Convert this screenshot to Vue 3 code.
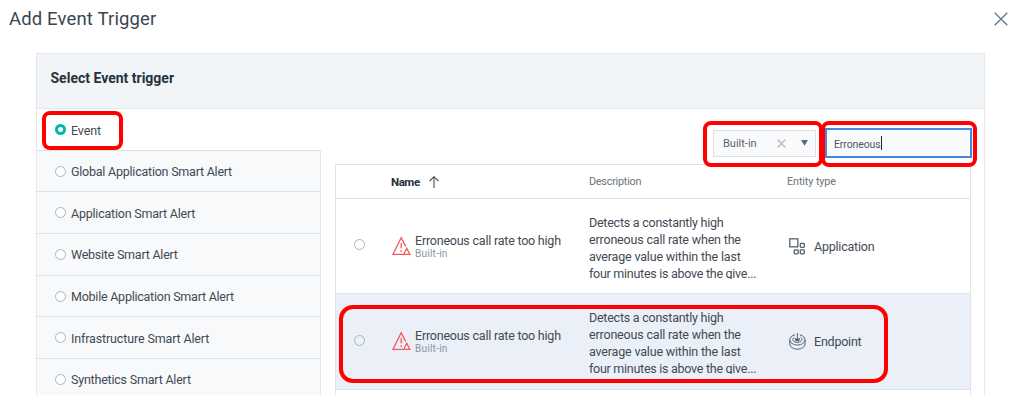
<script setup>
const triggers = [
  'Event',
  'Global Application Smart Alert',
  'Application Smart Alert',
  'Website Smart Alert',
  'Mobile Application Smart Alert',
  'Infrastructure Smart Alert',
  'Synthetics Smart Alert',
]
const spacing = ['t-event', 't-global', 't-app', 't-web', 't-mobile', 't-infra', 't-synth']
const rows = ['Application', 'Endpoint']
const lines = [
  'Detects a constantly high',
  'erroneous call rate when the',
  'average value within the last',
  'four minutes is above the give...',
]
</script>

<template>
  <div class="dialog">
    <header class="title-bar">
      <h1>Add Event Trigger</h1>
      <svg class="close" width="14" height="14" viewBox="0 0 14 14"><path d="M.7.7 13.3 13.3M13.3.7.7 13.3" /></svg>
    </header>

    <section class="panel">
      <div class="panel-head"><h2>Select Event trigger</h2></div>
      <div class="panel-body">
        <nav class="sidebar">
          <div v-for="(t, i) in triggers" :key="t" class="trigger" :class="{ active: i === 0 }">
            <span class="radio" :class="{ on: i === 0 }"></span>
            <span class="label" :class="spacing[i]">{{ t }}</span>
          </div>
        </nav>

        <main class="content">
          <div class="filters">
            <div class="select">
              <span>Built-in</span>
              <svg class="clear" width="9" height="9" viewBox="0 0 9 9"><path d="M.7.7 8.3 8.3M8.3.7.7 8.3" /></svg>
              <svg class="caret" width="7" height="6" viewBox="0 0 7 6"><path d="M0 0H7L3.5 5.8Z" /></svg>
            </div>
            <div class="search"><span>Erroneous</span><i class="cursor"></i></div>
          </div>

          <div class="table">
            <div class="row head">
              <div></div>
              <div class="name-head">
                <b>Name</b>
                <svg width="10" height="12" viewBox="0 0 10 12"><path d="M5 12V.8M.7 5 5 .7 9.300 5" /></svg>
              </div>
              <div class="col-head c-desc">Description</div>
              <div class="col-head c-type">Entity type</div>
            </div>
            <div v-for="(r, i) in rows" :key="r" class="row item" :class="{ selected: i === 1 }">
              <div class="pick"><span class="radio big"></span></div>
              <div class="name">
                <svg class="warn" width="19" height="20" viewBox="0 0 19 20">
                  <path d="M11.2 18.3H1L9.2 1.6 13.6 10.4" />
                  <path d="M9.2 7v5.3M9.2 14.2v1.7" />
                  <path d="M14.8 12.2 17.8 18.3H11.8Z" />
                </svg>
                <div>
                  <p class="event-name">Erroneous call rate too high</p>
                  <p class="kind">Built-in</p>
                </div>
              </div>
              <div class="desc">
                <p v-for="(l, n) in lines" :key="n" :class="'d' + n">{{ l }}</p>
              </div>
              <div class="entity">
                <svg v-if="i === 0" width="17" height="17" viewBox="0 0 17 17">
                  <rect x=".8" y=".8" width="8" height="8" />
                  <rect x="11.3" y="5.4" width="4" height="4" rx=".8" />
                  <rect x="5.2" y="11.8" width="4" height="4" rx=".8" />
                  <rect x="11.3" y="11.8" width="4" height="4" rx=".8" />
                </svg>
                <svg v-else class="thin" width="17" height="17" viewBox="0 0 17 17">
                  <path d="M6 1.8C2.9 2.5.8 4.5.8 6.8c0 2.900 3.400 5.200 7.600 5.200s7.600-2.300 7.600-5.200c0-2.300-2.100-4.300-5.200-5" />
                  <path d="M.8 7v3.900c0 2.900 3.400 5.300 7.600 5.300s7.600-2.400 7.600-5.300V7" />
                  <path d="M5.300 4.300c-2.700 1.600-1.800 5.100 3.100 5.100s5.800-3.500 3.100-5.100" />
                  <path d="M8.400 0v7.500" />
                  <path class="solid" d="M5.700 4.800 8.400 6l2.700-1.200-.9 3.400H6.600Z" />
                </svg>
                <span :class="'e' + i">{{ r }}</span>
              </div>
            </div>
          </div>
        </main>
      </div>
    </section>

    <div class="mark mark-event"></div>
    <div class="mark mark-select"></div>
    <div class="mark mark-search"></div>
    <div class="mark mark-row"></div>
  </div>
</template>

<style>
body { background: #fff; }
</style>

<style scoped>
* { box-sizing: border-box; }
h1, h2, p { margin: 0; font-weight: 400; }
.dialog {
  position: relative;
  width: 1020px;
  height: 395px;
  overflow: hidden;
  background: #fff;
  color: #3f4a54;
  font-family: Roboto, "Liberation Sans", sans-serif;
  white-space: nowrap;
}
svg { flex: none; fill: none; display: block; }
.title-bar { display: flex; justify-content: space-between; height: 53px; padding: 8px 12px 0 9px; }
h1 { font-size: 18.500px; line-height: 23px; letter-spacing: .15px; color: #3a4650; }
.close { margin-top: 4px; stroke: #637b8f; stroke-width: 1.4; }
.panel { width: 949px; height: 360px; margin-left: 36px; border: 1px solid #e4e8ec; }
.panel-head { height: 55px; padding: 15px 0 0 13.500px; background: #f1f5f7; border-bottom: 1px solid #e2e8ec; }
h2 { font-size: 14px; line-height: 18px; font-weight: 700; color: #27323c; }
.panel-body { display: flex; }
.sidebar { width: 284px; }
.trigger {
  display: flex;
  align-items: center;
  gap: 5px;
  height: 41.7px;
  padding-left: 18px;
  background: #f8f9fb;
  border-bottom: 1px solid #dee2e6;
  border-right: 1px solid #e0e6ea;
  font-size: 12.500px;
}
.trigger.active { background: #fff; border-right-color: transparent; }
.radio { display: block; flex: none; width: 11px; height: 11px; border: 1px solid #a9b5c0; border-radius: 50%; background: #fff; }
.radio.on { border: 3.500px solid #00b5ae; }
.radio.big { background: transparent; }
.label { line-height: 16px; padding-top: 2px; }
.t-event { padding-top: 3px; letter-spacing: -.1px; }
.t-global { letter-spacing: -.23px; }
.t-app { letter-spacing: -.22px; }
.t-web { letter-spacing: -.24px; }
.t-mobile { letter-spacing: -.24px; }
.t-infra { letter-spacing: -.14px; }
.t-synth { letter-spacing: -.21px; }
.content { flex: 1; padding: 19px 13px 0 14px; }
.filters { display: flex; justify-content: flex-end; align-items: center; gap: 9px; height: 30px; font-size: 11px; }
.select {
  display: flex;
  align-items: center;
  width: 103px;
  height: 27px;
  padding-left: 9px;
  background: #f9fafc;
  border: 1px solid #dee1e4;
  color: #59636c;
}
.select span { width: 54px; }
.clear { stroke: #c2c6ca; stroke-width: 1.7; }
.caret { margin-left: 15px; fill: #4f6b80; }
.search {
  display: flex;
  align-items: center;
  width: 147px;
  height: 30px;
  margin-right: -1px;
  padding-left: 7px;
  background: #f9fafc;
  border: 2px solid #4488e0;
  color: #4d5760;
  font-size: 10.500px;
  letter-spacing: -.1px;
}
.search span { padding-top: 2px; }
.cursor { width: 1px; height: 14px; background: #222; }
.table { height: 240px; margin-top: 6px; border: 1px solid #e1e4e6; }
.row { display: grid; grid-template-columns: 55px 198px 198px 1fr; }
.head { height: 34px; align-items: center; border-bottom: 1px solid #dfe3e6; color: #68737d; }
.name-head { display: flex; align-items: center; gap: 9px; font-size: 11.500px; letter-spacing: -.45px; color: #25303a; }
.name-head svg { stroke: #46525d; stroke-width: 1.1; }
.col-head { font-size: 10.800px; }
.c-desc { letter-spacing: -.22px; }
.c-type { letter-spacing: -.1px; }
.item { height: 95.300px; border-bottom: 1px solid #e0e5ea; }
.selected { background: #ebf0f8; }
.pick { padding: 40.400px 0 0 18px; }
.name { display: flex; gap: 4px; padding: 34px 0 0 1px; }
.warn { margin-top: 3px; stroke: #f8575d; stroke-width: 1.300; }
.event-name { font-size: 12.500px; line-height: 16px; letter-spacing: -.22px; }
.kind { font-size: 10px; line-height: 10px; letter-spacing: .25px; color: #8894a0; }
.desc { height: 64.500px; margin-top: 15px; overflow: hidden; font-size: 12.500px; line-height: 17px; }
.d0 { letter-spacing: -.24px; }
.d1, .d2 { letter-spacing: -.18px; }
.d3 { letter-spacing: -.27px; }
.entity { display: flex; align-items: center; gap: 8px; height: 20px; margin: 37px 0 0 2px; font-size: 12.500px; }
.entity svg { stroke: #56616c; stroke-width: 1.300; }
.entity .thin { stroke-width: 1; }
.entity .solid { fill: #56616c; stroke: none; }
.e0, .e1 { letter-spacing: -.22px; }
.mark { position: absolute; border: 4px solid #f00; border-radius: 8px; }
.mark-event { left: 42px; top: 111px; width: 81px; height: 39px; }
.mark-select { left: 703px; top: 121px; width: 120px; height: 46px; }
.mark-search { left: 821px; top: 121px; width: 156px; height: 46px; }
.mark-row { left: 339px; top: 305px; width: 549px; height: 78px; border-radius: 14px; }
</style>
